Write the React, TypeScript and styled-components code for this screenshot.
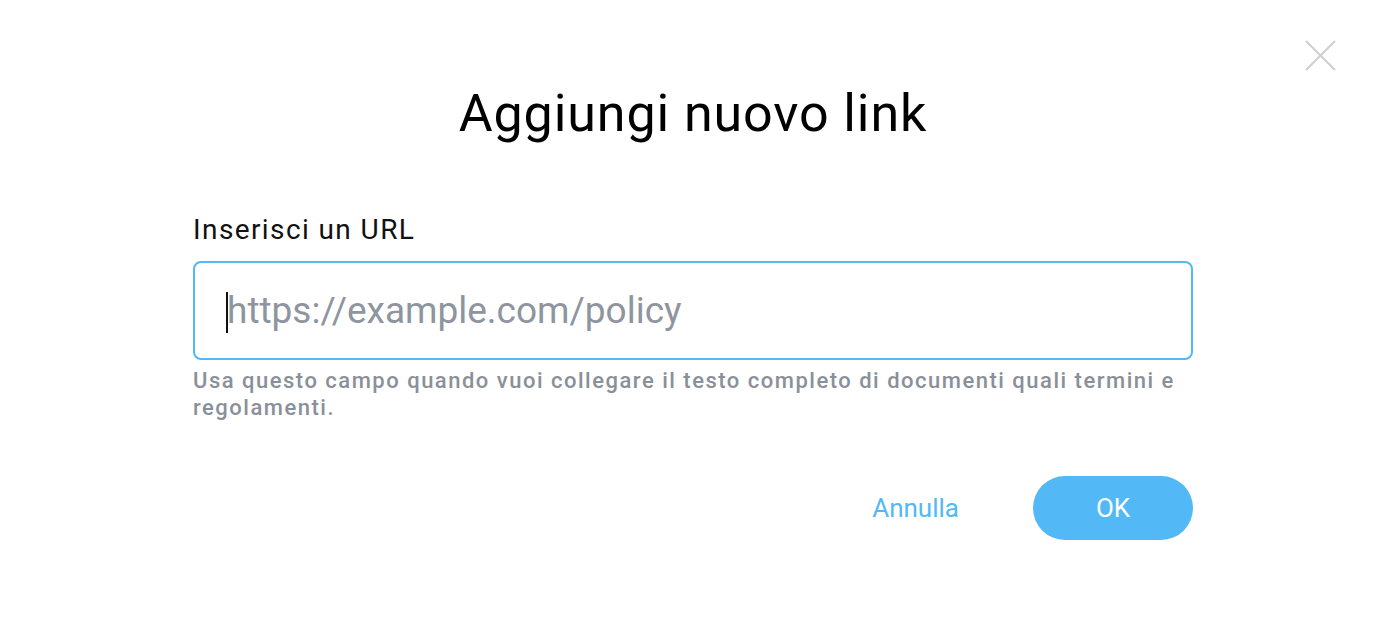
import styled, { createGlobalStyle } from "styled-components";

const GlobalStyle = createGlobalStyle`
  html, body {
    margin: 0;
    padding: 0;
    background: #ffffff;
    font-family: Roboto, "Liberation Sans", Arial, sans-serif;
  }
  * { box-sizing: border-box; }
`;

function App() {
  return (
    <>
      <GlobalStyle />
      <Modal>
        <CloseButton aria-label="Chiudi">
          <svg width="31" height="31" viewBox="0 0 31 31">
            <path d="M1 1 L30 30 M30 1 L1 30" stroke="#cfcfcf" strokeWidth="2" />
          </svg>
        </CloseButton>
        <Content>
          <Title>Aggiungi nuovo link</Title>
          <Field>
            <Label htmlFor="url">Inserisci un URL</Label>
            <InputBox>
              <Caret />
              <Input id="url" placeholder="https://example.com/policy" />
            </InputBox>
            <Hint>
              Usa questo campo quando vuoi collegare il testo completo di documenti quali termini e
              regolamenti.
            </Hint>
          </Field>
          <Actions>
            <TextButton>Annulla</TextButton>
            <PrimaryButton>OK</PrimaryButton>
          </Actions>
        </Content>
      </Modal>
    </>
  );
}

const Modal = styled.div`
  position: relative;
  width: 1386px;
  height: 634px;
  background: #fff;
`;

const CloseButton = styled.button`
  position: absolute;
  top: 40px;
  right: 50px;
  border: none;
  background: none;
  padding: 0;
  cursor: pointer;
  display: flex;
`;

const Content = styled.div`
  width: 1000px;
  margin: 0 auto;
  padding-top: 82px;
  display: flex;
  flex-direction: column;
`;

const Title = styled.h1`
  margin: 0;
  text-align: center;
  font-size: 52px;
  font-weight: 400;
  line-height: 64px;
  letter-spacing: 0.9px;
  color: #000;
`;

const Field = styled.div`
  margin-top: 67px;
  display: flex;
  flex-direction: column;
`;

const Label = styled.label`
  font-size: 28px;
  line-height: 34px;
  letter-spacing: 1.4px;
  color: #111;
`;

const InputBox = styled.div`
  position: relative;
  margin-top: 14px;
  height: 99px;
  border: 2px solid #52b9f6;
  border-radius: 8px;
  display: flex;
  align-items: center;
  padding: 0 32px;
`;

const Caret = styled.span`
  position: absolute;
  left: 31px;
  top: 29px;
  width: 2px;
  height: 41px;
  background: #111;
`;

const Input = styled.input`
  border: none;
  outline: none;
  width: 100%;
  font-family: inherit;
  font-size: 37px;
  color: #111;
  background: transparent;
  padding: 0;
  &::placeholder {
    color: #8e959e;
  }
`;

const Hint = styled.p`
  margin: 7px 0 0;
  font-size: 22px;
  line-height: 27px;
  font-weight: 500;
  letter-spacing: 1.5px;
  color: #8a9099;
`;

const Actions = styled.div`
  margin-top: 55px;
  display: flex;
  justify-content: flex-end;
  align-items: center;
  gap: 74px;
`;

const TextButton = styled.button`
  border: none;
  background: none;
  padding: 0;
  font-family: inherit;
  font-size: 26px;
  color: #52b9f6;
  cursor: pointer;
`;

const PrimaryButton = styled.button`
  width: 160px;
  height: 64px;
  border: none;
  border-radius: 32px;
  background: #52b9f6;
  color: #fff;
  font-family: inherit;
  font-size: 26px;
  cursor: pointer;
`;

export default App;
